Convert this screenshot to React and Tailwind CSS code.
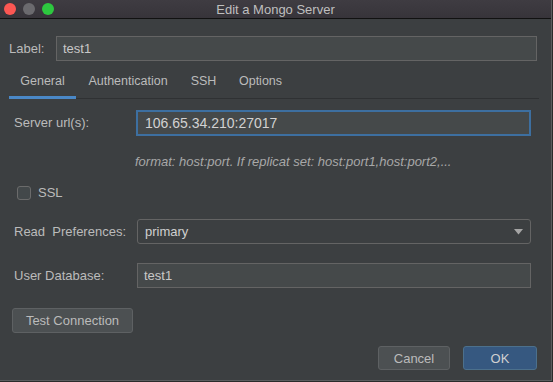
export default function App() {
  const tabs = [
    { name: 'General', w: 'w-[67px]' },
    { name: 'Authentication', w: 'w-[104px]' },
    { name: 'SSH', w: 'w-[47px]' },
    { name: 'Options', w: 'w-[67px]' },
  ]

  return (
    <div
      className="w-[553px] h-[382px] bg-[#2b2b2b] overflow-hidden text-[13px] text-[#bbbbbb]"
      style={{ fontFamily: '"Liberation Sans", Arial, sans-serif' }}
    >
      <div className="w-[552px] h-[381px] bg-[#3c3f41] border-r border-b border-[#5a5c5e] flex flex-col">
        {/* TITLE BAR */}
        <div className="relative h-[19px] shrink-0 bg-gradient-to-b from-[#3f3c42] to-[#37343a] border-b border-[#111111] flex items-center justify-center">
          <div className="absolute left-[4px] top-[3px] flex gap-[7px]">
            <span className="w-[12px] h-[12px] rounded-full bg-[#fc5753]" />
            <span className="w-[12px] h-[12px] rounded-full bg-[#6b6a6e]" />
            <span className="w-[12px] h-[12px] rounded-full bg-[#2dc83f]" />
          </div>
          <span className="text-[#bfbfbf] leading-none">Edit a Mongo Server</span>
        </div>

        {/* LABEL */}
        <div className="mt-[17px] h-[25px] pl-[9px] pr-[14px] flex items-center">
          <span className="w-[47px]">Label:</span>
          <div className="flex-1 h-[25px] bg-[#45494a] border border-[#646464] flex items-center px-[6px] text-[#c8c8c8]">
            test1
          </div>
        </div>

        {/* TABS */}
        <div className="mt-[2px] ml-[9px] mr-[12px] flex border-b border-[#2f3133] text-[12.5px]">
          {tabs.map((t, i) => (
            <div
              key={t.name}
              className={`${t.w} h-[36px] flex items-center justify-center pt-[3px] border-b-[3px] -mb-px ${
                i === 0 ? 'border-[#4a88c7]' : 'border-transparent'
              }`}
            >
              {t.name}
            </div>
          ))}
        </div>

        {/* GENERAL PANEL */}
        <div className="pl-[14px] pr-[20px] flex flex-col">
          <div className="mt-[11px] h-[26px] flex items-center">
            <span className="w-[122px]">Server url(s):</span>
            <div className="flex-1 h-[26px] bg-[#45494a] border-2 border-[#3d6fa0] flex items-center px-[7px] text-[#d2d2d2] text-[14px]">
              106.65.34.210:27017
            </div>
          </div>

          <div className="mt-[18px] h-[16px] leading-[16px] pl-[121px] italic text-[13px] text-[#a8a8a8]">
            format: host:port. If replicat set: host:port1,host:port2,...
          </div>

          <div className="mt-[15px] h-[16px] ml-[3px] flex items-center gap-[7px]">
            <span className="w-[14px] h-[14px] rounded-[3px] border border-[#6b6b6b] bg-[#43484a]" />
            <span>SSL</span>
          </div>

          <div className="mt-[18px] h-[25px] flex items-center">
            <span className="w-[123px] whitespace-pre">Read  Preferences:</span>
            <div className="flex-1 h-[25px] rounded-[3px] border border-[#646464] bg-[#3c3f41] flex items-center justify-between pl-[7px] pr-[7px] text-[#d0d0d0]">
              <span>primary</span>
              <svg width="9" height="6" viewBox="0 0 9 6">
                <path d="M0 0 H9 L4.5 5.5 Z" fill="#a5a5a5" />
              </svg>
            </div>
          </div>

          <div className="mt-[19px] h-[25px] flex items-center">
            <span className="w-[123px]">User Database:</span>
            <div className="flex-1 h-[25px] bg-[#45494a] border border-[#646464] flex items-center px-[6px] text-[#c8c8c8]">
              test1
            </div>
          </div>
        </div>

        {/* TEST CONNECTION */}
        <div className="mt-[20px] ml-[12px] h-[25px] flex">
          <button className="w-[121px] h-[25px] rounded-[3px] border border-[#5e6163] bg-[#4c5052] text-[#bbbbbb] text-[13px] leading-none">
            Test Connection
          </button>
        </div>

        {/* FOOTER */}
        <div className="mt-[13px] mr-[14px] h-[24px] flex justify-end gap-[13px]">
          <button className="w-[72px] h-[24px] rounded-[3px] border border-[#5e6163] bg-[#4c5052] text-[#bbbbbb] text-[13px] leading-none">
            Cancel
          </button>
          <button className="w-[74px] h-[24px] rounded-[3px] border border-[#4c708c] bg-[#365880] text-[#d0d0d0] text-[13px] leading-none">
            OK
          </button>
        </div>
      </div>
    </div>
  )
}
